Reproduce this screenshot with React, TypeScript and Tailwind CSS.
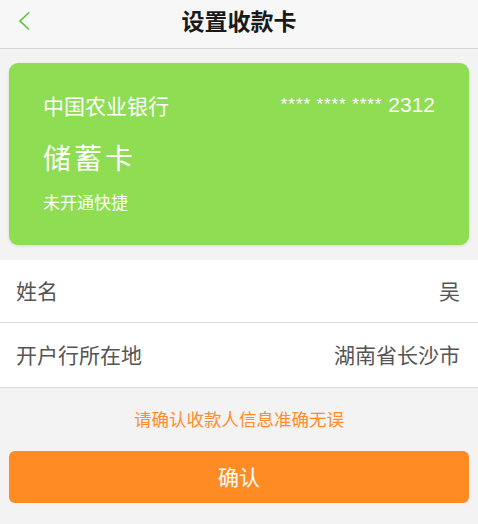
export default function App() {
  const font = { fontFamily: '"Noto Sans CJK SC", "Liberation Sans", sans-serif' };
  return (
    <div className="min-h-[524px] w-full bg-[#f3f3f3]" style={font}>
      {/* Header */}
      <div className="relative flex h-[49px] items-start justify-center border-b border-[#d8d8d8] bg-[#f7f7f7] pt-[5px]">
        <button className="absolute left-[17px] top-[10px] flex h-[22px] w-[14px] items-center justify-center">
          <svg width="12" height="20" viewBox="0 0 12 20" fill="none">
            <path d="M11 1.5 2 10l9 8.5" stroke="#5cc43c" strokeWidth="1.6" />
          </svg>
        </button>
        <h1 className="text-[23px] font-bold leading-[30px] text-[#1a1a1a]">设置收款卡</h1>
      </div>

      {/* Card */}
      <div className="px-[9px] pt-[14px]">
        <div className="h-[182px] rounded-[9px] bg-[#8edd52] px-[34px] pt-[29px] text-white shadow-[0_1px_3px_rgba(0,0,0,0.12)]">
          <div className="flex items-center justify-between">
            <span className="text-[21px] leading-[26px]">中国农业银行</span>
            <span className="flex items-center gap-[6px] leading-[26px]" style={{ fontFamily: '"Liberation Sans", sans-serif' }}>
              <span className="text-[17px] tracking-[0.9px]">**** **** ****</span>
              <span className="text-[21px]">2312</span>
            </span>
          </div>
          <div className="mt-[21px] text-[28px] leading-[36px] tracking-[3px]">储蓄卡</div>
          <div className="mt-[16px] text-[17px] leading-[22px]">未开通快捷</div>
        </div>
      </div>

      {/* Info rows */}
      <div className="mt-[15px] border-b border-[#d9d9d9] bg-white">
        <div className="flex h-[63px] items-center justify-between border-b border-[#d9d9d9] pl-[16px] pr-[18px] text-[21px] text-[#555]">
          <span>姓名</span>
          <span>吴</span>
        </div>
        <div className="flex h-[64px] items-center justify-between pl-[16px] pr-[18px] text-[21px] text-[#555]">
          <span>开户行所在地</span>
          <span>湖南省长沙市</span>
        </div>
      </div>

      {/* Notice */}
      <div className="flex h-[63px] items-center justify-center text-[17.5px] text-[#ff8c28]">请确认收款人信息准确无误</div>

      {/* Confirm */}
      <div className="px-[9px]">
        <button className="flex h-[52px] w-full items-center justify-center rounded-[6px] bg-[#ff8b24] text-[21px] text-white">
          确认
        </button>
      </div>
    </div>
  );
}
